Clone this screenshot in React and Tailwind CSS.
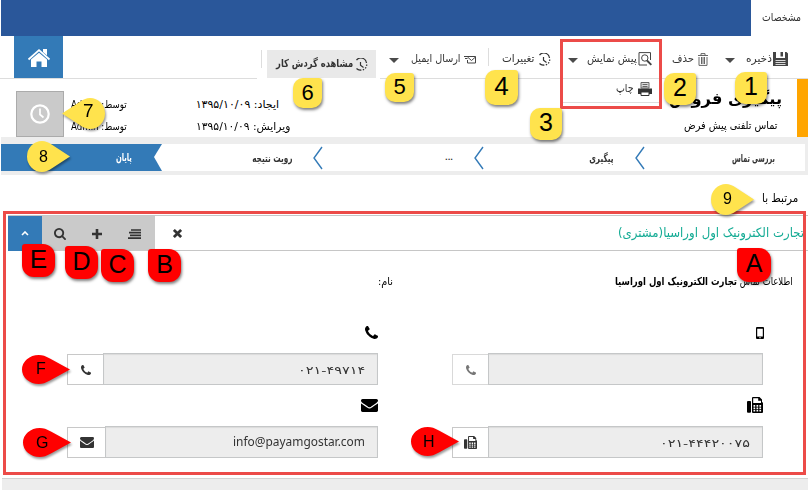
import React, { useLayoutEffect, useRef, useState } from "react";

// One line of text scaled horizontally so that it fills its column.
function Fit({ className = "", dir = "rtl", children }) {
  const box = useRef(null);
  const line = useRef(null);
  const [scale, setScale] = useState(1);
  useLayoutEffect(() => {
    setScale(box.current.offsetWidth / line.current.offsetWidth);
  }, [children]);
  return (
    <div ref={box} dir={dir} className={`flex shrink-0 items-center justify-start whitespace-nowrap ${className}`}>
      <span
        ref={line}
        className={`shrink-0 ${dir === "rtl" ? "origin-right" : "origin-left"}`}
        style={{ transform: `scaleX(${scale})` }}
      >
        {children}
      </span>
    </div>
  );
}

const Glyph = ({ d, box = "0 0 1792 1792", className }) => (
  <svg viewBox={box} className={`shrink-0 ${className}`} fill="currentColor" preserveAspectRatio="none">
    <path d={d} />
  </svg>
);

const PHONE =
  "M1408 1240q0 27-10 70.5t-21 68.5q-21 50-122 106-94 51-186 51-27 0-53-3.5t-57.5-12.5-47-14.5-55.5-20.5-49-18q-98-35-175-83-127-79-264-216t-216-264q-48-77-83-175-3-9-18-49t-20.5-55.5-14.5-47-12.5-57.5-3.5-53q0-92 51-186 56-101 106-122 25-11 68.5-21t70.5-10q14 0 21 3 18 6 53 76 11 19 30 54t35 63.5 31 53.5q3 4 17.5 25t21.5 35.5 7 28.5q0 20-28.5 50t-62 55-62 53-28.5 46q0 9 5 22.5t8.5 20.5 14 24 11.5 19q76 137 174 235t235 174q2 1 19 11.5t24 14 20.5 8.5 22.5 5q18 0 46-28.5t53-62 55-62 50-28.5q14 0 28.5 7t35.5 21.5 25 17.5q25 15 53.5 31t63.5 35 54 30q70 35 76 53 3 7 3 21z";
const MAIL =
  "M1792 710v794q0 66-47 113t-113 47h-1472q-66 0-113-47t-47-113v-794q44 49 101 87 362 246 497 345 57 42 92.5 65.5t94.5 48 110 24.5h2q51 0 110-24.5t94.5-48 92.5-65.5q170-123 498-345 57-39 100-87zm0-294q0 79-49 151t-122 123q-376 261-468 325-10 7-42.5 31t-54 38.5-52 32.5-57.5 27-50 9h-2q-23 0-50-9t-57.5-27-52-32.5-54-38.5-42.5-31q-91-64-262-182.5t-205-142.5q-62-42-117-115.5t-55-136.5q0-78 41.5-130t118.5-52h1472q65 0 112.5 47t47.5 113z";
const SEARCH =
  "M1216 832q0-185-131.5-316.5t-316.5-131.5-316.5 131.5-131.5 316.5 131.5 316.5 316.5 131.5 316.5-131.5 131.5-316.5zm512 832q0 52-38 90t-90 38q-54 0-90-38l-343-342q-179 124-399 124-143 0-273.5-55.5t-225-150-150-225-55.5-273.5 55.5-273.5 150-225 225-150 273.5-55.5 273.5 55.5 225 150 150 225 55.5 273.5q0 220-124 399l343 343q37 37 37 90z";

const Phone = ({ className }) => <Glyph d={PHONE} box="0 128 1408 1408" className={className} />;
const Mail = ({ className }) => <Glyph d={MAIL} box="0 256 1792 1408" className={className} />;

const Fax = ({ className }) => (
  <svg viewBox="0 0 16 16" className={`shrink-0 ${className}`} fill="currentColor" preserveAspectRatio="none">
    <path d="M1 4h2.2q.8 0 .8.8v9.900q0 1-1 1H1q-1 0-1-1V5q0-1 1-1z" />
    <path
      fillRule="evenodd"
      d="M5 1q0-1 1-1h6.500L15 2.500V5q1 .4 1 1.300V15q0 1-1 1H6q-1 0-1-1zM6.200 1.200V6H14V3.800h-2.800V1.200zM6.500 8v1.700h1.700V8zM9.500 8v1.700h1.700V8zM12.400 8v1.700h1.700V8zM6.500 10.400v1.700h1.700v-1.700zM9.500 10.400v1.700h1.700v-1.700zM12.400 10.400v1.700h1.700v-1.700zM6.500 12.800v1.700h1.700v-1.700zM9.500 12.800v1.700h1.700v-1.700zM12.400 12.800v1.700h1.700v-1.700z"
    />
  </svg>
);

const Caret = ({ className = "" }) => (
  <svg viewBox="0 0 10 5" className={`mt-1.5 h-[5px] w-[10px] shrink-0 ${className}`} fill="#4a4a4a">
    <path d="M0 0h10L5 5z" />
  </svg>
);

const History = ({ className = "" }) => (
  <svg viewBox="0 0 13 13" className={`h-[13px] w-[13px] shrink-0 ${className}`} fill="none" stroke="#333">
    <path d="M1.500 2.200A5.600 5.600 0 0 1 11.500 5" strokeWidth="1.300" />
    <path d="M11.700 6.500A5.600 5.600 0 0 1 5 12" strokeWidth="1.300" strokeDasharray="1.400 1.400" />
    <path d="M5 12.200Q3 11.900 1.500 10.500" strokeWidth="1.200" />
    <path d="M5.500 4v3.300l3 2.200" strokeWidth="1.200" />
  </svg>
);

// Square call-out with a single sharp corner.
function Tag({ className, children }) {
  return (
    <div
      className={`absolute flex items-center justify-center pb-0.5 font-['Liberation_Sans'] text-black shadow-[1px_2px_3px_rgba(0,0,0,0.5)] ${className}`}
    >
      {children}
    </div>
  );
}

// Drop-shaped call-out; the tip points right unless flipped.
function Drop({ className, color, flip, children, textClass }) {
  return (
    <div className={`absolute drop-shadow-[1px_2px_1px_rgba(0,0,0,0.4)] ${className}`}>
      <svg viewBox="0 0 43 31" className={`absolute inset-0 h-full w-full ${flip ? "-scale-x-100" : ""}`} preserveAspectRatio="none">
        <path d="M43 15.500 25 3.800C21 1.200 18.500 0 15 0A15 15.500 0 0 0 15 31C18.500 31 21 29.800 25 27.200Z" fill={color} />
      </svg>
      <span className={`absolute inset-y-0 flex items-center font-['Liberation_Sans'] text-black ${textClass}`}>{children}</span>
    </div>
  );
}

const YELLOW = "rounded-[10px] rounded-tr-[3px] bg-[#ffe34d]";
const RED = "rounded-[12px] rounded-tl-[3px] bg-[#ff0000]";

function Field({ addon, addonClass = "w-[36px]", children, dim }) {
  return (
    <div className="flex h-8 w-[311px] shrink-0 items-end">
      <div
        className={`flex h-[31px] shrink-0 items-center justify-center border border-r-0 bg-white ${dim ? "border-[#d9d9d9] text-[#777]" : "border-[#c8c8c8] text-[#333]"} ${addonClass}`}
      >
        {addon}
      </div>
      <div className="flex h-8 flex-1 items-center justify-end border border-[#c5c7c8] bg-[#ededed] pr-3 text-[#333] shadow-[inset_0_1px_1px_rgba(0,0,0,0.08)]">
        {children}
      </div>
    </div>
  );
}

const Chevron = ({ className }) => (
  <svg viewBox="0 0 10 24" className={`h-6 w-[10px] shrink-0 ${className}`} fill="none" stroke="#337ab7" strokeWidth="1.400">
    <path d="M9 1 1 12l8 11" />
  </svg>
);

export default function App() {
  return (
    <div className="relative h-[490px] w-[808px] overflow-hidden bg-white font-['DejaVu_Sans',sans-serif] text-[11px] text-[#333]">
      <div className="flex h-9 pl-px">
        <div className="w-[750px] bg-[#2a579a]" />
        <Fit className="ml-[11px] w-[39px]">مشخصات</Fit>
      </div>

      <div className="flex h-[42px] items-center">
        <div className="ml-3.5 flex h-[42px] w-[49px] items-center justify-center bg-[#337ab7] pt-0.5">
          <svg viewBox="0 0 24 20" className="h-5 w-6" fill="white">
            <path d="M12 4.800 20 11.500V19h-5.500v-5.500h-5V19H4v-7.500z" />
            <path d="M1.500 11.500 12 2.200 22.500 11.500" fill="none" stroke="white" strokeWidth="1.800" />
            <path d="M16 1h4v6.500L16 4z" />
          </svg>
        </div>
        <div className="ml-[198px] mt-1 h-[18px] w-px bg-[#ddd]" />
        <div className="ml-[5px] flex h-7 w-[109px] items-center self-end bg-[#e9e9e9] pl-[9px]">
          <Fit className="w-[77px] font-bold">مشاهده گردش کار</Fit>
          <History className="ml-0.5" />
        </div>
        <Caret className="ml-[13px]" />
        <Fit className="ml-3 mt-1 w-[50px]">ارسال ایمیل</Fit>
        <svg viewBox="0 0 12 9" className="ml-[3px] mt-1 h-[9px] w-3" fill="none" stroke="#444">
          <path d="M3 1.500h8.500v6.500H3.500V5M3.500 2 7.500 5.500l4-3.500M0 1.500h3M1 3.500h2.500" />
        </svg>
        <div className="ml-3 h-[18px] w-px bg-[#ddd]" />
        <Fit className="ml-3 mt-1 w-[33px]">تغییرات</Fit>
        <History className="ml-1 mt-1" />
        <Caret className="ml-[17px]" />
        <Fit className="ml-[9px] mt-1 w-[50px]">پیش نمایش</Fit>
        <svg viewBox="0 0 14 14" className="ml-px mt-1 h-3.5 w-3.5" fill="none" stroke="#444">
          <path d="M12.500 8V.6H1V13h8" />
          <circle cx="6.800" cy="6" r="3.200" />
          <path d="m9 8.500 4.300 4.300" strokeWidth="1.900" />
        </svg>
        <Fit className="ml-5 mt-1 w-[22px]">حذف</Fit>
        <svg viewBox="0 0 10 13" className="ml-1 mt-1 h-[13px] w-2.5" fill="none" stroke="#666">
          <path d="M0 2.500h10M3 2V.6h4V2M1 4v8.400h8V4M3.500 4v7M5 4v7M6.500 4v7" />
        </svg>
        <Caret className="ml-[17px]" />
        <Fit className="ml-[11px] mt-1 w-[26px]">ذخیره</Fit>
        <svg viewBox="0 0 15 14" className="ml-px mt-1 h-3.5 w-[15px]" fill="#444">
          <path d="M0 0h3v6h9V0h1.500L15 1.500V14H0z" />
          <path d="M4 0h7v5H4z" fill="white" />
          <path d="M7.500 0h2.500v4.500H7.500z" />
          <path d="M2.500 8.500h10M2.500 10.500h10M2.500 12.500h10" stroke="white" strokeWidth=".8" />
        </svg>
      </div>
      <div className="flex h-px">
        <div className="w-[257px] bg-[#ddd]" />
        <div className="w-[123px]" />
        <div className="flex-1 bg-[#ddd]" />
      </div>

      <div className="flex h-[58px] text-black">
        <div className="ml-4 mt-3 flex h-[46px] w-12 items-center justify-center border border-[#ababab] bg-[#cacaca]">
          <svg viewBox="0 0 20 20" className="h-5 w-5" fill="none" stroke="white" strokeWidth="2.200">
            <circle cx="10" cy="10" r="8.700" />
            <path d="M10 4.500V10.500l3.500 3" strokeWidth="1.700" />
          </svg>
        </div>
        <div className="ml-[7px] flex flex-col gap-1.5 pt-[18px]">
          <Fit className="h-4 w-[56px]">توسط: Admin</Fit>
          <Fit className="h-4 w-[56px]">توسط: Admin</Fit>
        </div>
        <div className="ml-[69px] flex w-[95px] flex-col gap-1.5 pt-[18px]">
          <Fit className="h-4 w-[83px]">ایجاد: ۱۳۹۵/۱۰/۰۹</Fit>
          <Fit className="h-4 w-[94px]">ویرایش: ۱۳۹۵/۱۰/۰۹</Fit>
        </div>
        <div className="ml-[378px] w-[128px]">
          <Fit className="mt-1.5 h-7 w-[113px] text-[16px] font-bold">پیگیری فروش</Fit>
          <Fit className="ml-[15px] mt-[5px] h-4 w-[93px]">تماس تلفنی پیش فرض</Fit>
        </div>
        <div className="w-[11px] bg-[#ffa500]" />
      </div>

      <div className="ml-px h-[7px] bg-[#ededed]" />
      <div className="ml-px flex h-[27px] items-center text-[11px]">
        <div className="flex h-[27px] w-[161px] bg-[#337ab7]">
          <Fit className="ml-[115px] mt-0.5 w-4 font-bold text-white">پایان</Fit>
          <svg viewBox="0 0 8 27" className="ml-auto h-[27px] w-2" fill="white">
            <path d="M8 0v27L0 13z" />
          </svg>
        </div>
        <Fit className="ml-[90px] mt-1 w-10 font-bold">رویت نتیجه</Fit>
        <Chevron className="ml-[21px]" />
        <div className="ml-[122px] mt-0.5 w-2 text-[7px] font-bold">...</div>
        <Chevron className="ml-[21px]" />
        <Fit className="ml-[105px] mt-1 w-[24px] font-bold">پیگیری</Fit>
        <Chevron className="ml-[22px]" />
        <Fit className="ml-[87px] mt-1 w-[43px] font-bold">بررسی تماس</Fit>
        <div className="ml-auto h-[27px] w-[3px] bg-[#ededed]" />
      </div>
      <div className="ml-px h-1 bg-[#ededed]" />

      <div className="flex h-10 justify-end pr-2.5 text-black">
        <Fit className="h-[46px] w-9 text-[12px]">مرتبط با</Fit>
      </div>

      <div className="ml-2 flex h-9 border-y border-[#c6c6c6]">
        <div className="flex h-[35px] w-[34px] items-center justify-center bg-[#337ab7]">
          <svg viewBox="0 0 8 5" className="h-[5px] w-2" fill="none" stroke="white" strokeWidth="1.600">
            <path d="m1 4 3-3 3 3" />
          </svg>
        </div>
        <div className="flex h-[35px] w-[113px] items-center bg-[#cacaca]">
          <Glyph d={SEARCH} box="64 128 1664 1664" className="ml-3 h-3 w-3" />
          <svg viewBox="0 0 10 10" className="ml-[26px] h-2.5 w-2.5" stroke="#333" strokeWidth="2.600">
            <path d="M5 0v10M0 5h10" />
          </svg>
          <svg viewBox="0 0 13 10" className="ml-[26px] h-2.5 w-[13px]" stroke="#333" strokeWidth="1.700">
            <path d="M3 1h10M1 3.700h12M2 6.400h11M0 9.100h13" />
          </svg>
        </div>
        <svg viewBox="0 0 10 10" className="ml-[18px] mt-[13px] h-[9px] w-[9px]" stroke="#333" strokeWidth="3">
          <path d="m1 1 8 8M9 1 1 9" />
        </svg>
        <Fit className="ml-auto mr-1 w-[186px] text-[13px] text-[#13ab94]">تجارت الکترونیک اول اوراسیا(مشتری)</Fit>
      </div>

      <div className="flex pt-[22px] text-[11px] text-black">
        <Fit className="ml-[378px] h-[18px] w-[15px]">نام:</Fit>
        <Fit className="ml-[222px] h-[18px] w-[178px]">
          اطلاعات تماس <b>تجارت الکترونیک اول اوراسیا</b>
        </Fit>
      </div>

      <div className="flex h-[62px] items-end pb-3.5 pl-[365px] text-black">
        <Phone className="h-[13px] w-[13px]" />
        <svg viewBox="0 0 8 12" className="ml-[378px] h-3 w-2" fillRule="evenodd">
          <path d="M1 0h6q1 0 1 1v10q0 1-1 1H1q-1 0-1-1V1q0-1 1-1zm.2 1.800v7.700h5.600V1.800zM3.300 10.300v1h1.400v-1z" />
        </svg>
      </div>
      <div className="flex gap-[74px] pl-[67px]">
        <Field addon={<Phone className="h-2.5 w-2.5" />}>
          <Fit dir="ltr" className="mt-1 w-[67px]">۰۲۱-۴۹۷۱۴</Fit>
        </Field>
        <Field dim addon={<Phone className="h-2.5 w-2.5" />} />
      </div>

      <div className="flex h-[41px] pl-[361px] pt-3 text-black">
        <Mail className="mt-0.5 h-[13px] w-[17px]" />
        <Fax className="ml-[369px] h-4 w-4" />
      </div>
      <div className="flex gap-[74px] pl-[67px]">
        <Field addonClass="w-[38px]" addon={<Mail className="h-[11px] w-[14px]" />}>
          <Fit dir="ltr" className="w-[132px] font-['Noto_Sans',sans-serif] text-[13px]">info@payamgostar.com</Fit>
        </Field>
        <Field addon={<Fax className="h-[13px] w-[13px]" />}>
          <Fit dir="ltr" className="mt-1 w-[90px]">۰۲۱-۴۴۴۲۰۰۷۵</Fit>
        </Field>
      </div>
      <div className="ml-0.5 mt-5 h-3 border-t border-[#d2d2d2] bg-[#ededed]" />

      {/* preview drop-down */}
      <div className="absolute left-[560px] top-[39px] h-[70px] w-[102px] border-[3px] border-[#ec4b48]">
        <div className="mt-9 flex h-[25px] items-center border-b border-[#ddd] pb-0.5">
          <Fit className="ml-[53px] w-[18px]">چاپ</Fit>
          <svg viewBox="0 0 14 14" className="ml-1 h-3.5 w-3.5" fill="#333">
            <path d="M3 .5h8V6H3z" fill="#ddd" stroke="#666" />
            <path d="M4.500 2.500h5M4.500 4.500h5" stroke="#666" />
            <path d="M0 6.500h14V12H0z" />
            <path d="M3 10h8v3.500H3z" fill="white" stroke="#333" />
          </svg>
        </div>
      </div>

      <div className="absolute left-[3px] top-[211px] h-[264px] w-[803px] border-[3px] border-[#ec4b48]" />

      {/* numbered call-outs */}
      <Tag className={`left-[735px] top-[72px] h-[32px] w-8 text-[25px] ${YELLOW}`}>1</Tag>
      <Tag className={`left-[664px] top-[73px] h-[32px] w-8 text-[25px] ${YELLOW}`}>2</Tag>
      <Tag className={`left-[530px] top-[108px] h-[32px] w-8 text-[25px] ${YELLOW}`}>3</Tag>
      <Tag className={`left-[485px] top-[70px] h-[35px] w-[33px] text-[26px] ${YELLOW}`}>4</Tag>
      <Tag className={`left-[385px] top-[73px] h-[29px] w-[29px] text-[22px] ${YELLOW}`}>5</Tag>
      <Tag className={`left-[293px] top-[78px] h-[30px] w-[29px] text-[22px] ${YELLOW}`}>6</Tag>
      <Drop className="left-[62px] top-[98px] h-[31px] w-[43px]" color="#ffe34d" flip textClass="left-[21px] pb-1 text-[19px]">7</Drop>
      <Drop className="left-[27px] top-[141px] h-[31px] w-[43px]" color="#ffe34d" textClass="left-[12px] text-[16px]">8</Drop>
      <Drop className="left-[711px] top-[184px] h-[31px] w-[43px]" color="#ffe34d" textClass="left-[12px] pb-0.5 text-[16px]">9</Drop>

      {/* lettered call-outs */}
      <Tag className={`left-[737px] top-[248px] h-[34px] w-[34px] text-[25px] ${RED}`}>A</Tag>
      <Tag className={`left-[148px] top-[249px] h-[33px] w-[33px] text-[25px] ${RED}`}>B</Tag>
      <Tag className={`left-[101px] top-[249px] h-[33px] w-[33px] text-[25px] ${RED}`}>C</Tag>
      <Tag className={`left-[65px] top-[246px] h-[33px] w-[33px] text-[25px] ${RED}`}>D</Tag>
      <Tag className={`left-[22px] top-[244px] h-[33px] w-[33px] text-[26px] ${RED}`}>E</Tag>
      <Drop className="left-[22px] top-[355px] h-[29px] w-12" color="#ff0000" textClass="left-[14px] pb-0.5 text-[16px]">F</Drop>
      <Drop className="left-[23px] top-[428px] h-[29px] w-12" color="#ff0000" textClass="left-[13px] text-[16px]">G</Drop>
      <Drop className="left-[411px] top-[427px] h-[29px] w-12" color="#ff0000" textClass="left-[12px] text-[16px]">H</Drop>
    </div>
  );
}
